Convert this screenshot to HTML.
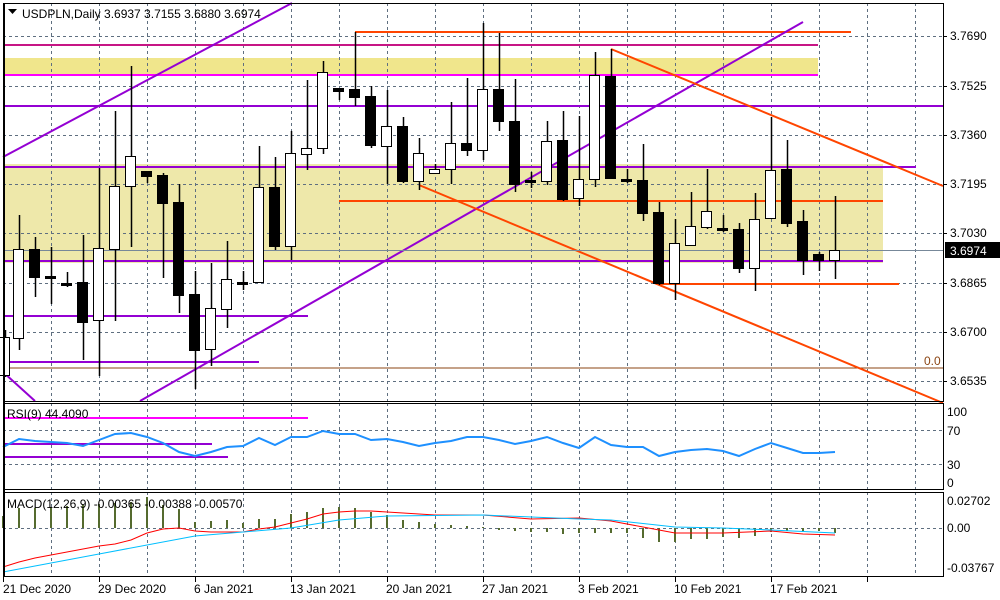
<!DOCTYPE html>
<html><head><meta charset="utf-8"><style>
html,body{margin:0;padding:0;background:#fff;width:1000px;height:600px;overflow:hidden}
svg{display:block;font-family:"Liberation Sans",Tahoma,sans-serif;font-size:12px}
</style></head><body>
<svg id="s" width="1000" height="600" viewBox="0 0 1000 600" xmlns="http://www.w3.org/2000/svg">
<rect width="1000" height="600" fill="#fff"/>
<rect x="3" y="58" width="815" height="16" fill="#F0E68C"/>
<rect x="3" y="164" width="880" height="99" fill="#EEE8AA"/>
<path fill="none" stroke="#5F6F80" stroke-width="1" stroke-dasharray="3 3" d="M3 36.5H943M3 86.5H943M3 135.5H943M3 184.5H943M3 233.5H943M3 283.5H943M3 332.5H943M3 381.5H943M3 430.5H943M3 464.5H943M3 528.5H943
M51.5 3V401M51.5 403V490M51.5 492V577
M99.5 3V401M99.5 403V490M99.5 492V577
M147.5 3V401M147.5 403V490M147.5 492V577
M195.5 3V401M195.5 403V490M195.5 492V577
M243.5 3V401M243.5 403V490M243.5 492V577
M291.5 3V401M291.5 403V490M291.5 492V577
M339.5 3V401M339.5 403V490M339.5 492V577
M387.5 3V401M387.5 403V490M387.5 492V577
M435.5 3V401M435.5 403V490M435.5 492V577
M483.5 3V401M483.5 403V490M483.5 492V577
M531.5 3V401M531.5 403V490M531.5 492V577
M579.5 3V401M579.5 403V490M579.5 492V577
M627.5 3V401M627.5 403V490M627.5 492V577
M675.5 3V401M675.5 403V490M675.5 492V577
M723.5 3V401M723.5 403V490M723.5 492V577
M771.5 3V401M771.5 403V490M771.5 492V577
M819.5 3V401M819.5 403V490M819.5 492V577
M867.5 3V401M867.5 403V490M867.5 492V577
M915.5 3V401M915.5 403V490M915.5 492V577"/>
<g stroke-width="2">
<line x1="3" y1="45" x2="818" y2="45" stroke="#C71585"/>
<line x1="3" y1="75" x2="818" y2="75" stroke="#FF00FF"/>
<line x1="3" y1="106" x2="943" y2="106" stroke="#9400D3"/>
<line x1="3" y1="167" x2="916" y2="167" stroke="#9400D3"/>
<line x1="3" y1="261" x2="883" y2="261" stroke="#9400D3"/>
<line x1="355" y1="32" x2="851" y2="32" stroke="#FF4500"/>
<line x1="339" y1="201" x2="883" y2="201" stroke="#FF4500"/>
<line x1="659" y1="284" x2="899" y2="284" stroke="#FF4500"/>
<line x1="3" y1="316" x2="308" y2="316" stroke="#9400D3"/>
<line x1="3" y1="362" x2="259" y2="362" stroke="#9400D3"/>
<line x1="3" y1="368" x2="943" y2="368" stroke="#8B4513" stroke-width="1"/>
<line x1="3" y1="157" x2="292" y2="3" stroke="#9400D3"/>
<line x1="140" y1="401" x2="803" y2="22" stroke="#9400D3"/>
<line x1="3" y1="372" x2="35" y2="401" stroke="#9400D3"/>
<line x1="419" y1="185" x2="943" y2="403" stroke="#FF4500"/>
<line x1="611" y1="49" x2="943" y2="186" stroke="#FF4500"/>
<line x1="3" y1="418" x2="308" y2="418" stroke="#FF00FF"/>
<line x1="3" y1="444" x2="212" y2="444" stroke="#9400D3"/>
<line x1="3" y1="457" x2="228" y2="457" stroke="#9400D3"/>
</g>
<line x1="3" y1="250.5" x2="943" y2="250.5" stroke="#778899"/>
<g id="c"></g>
<polyline id="rsi" fill="none" stroke="#1E90FF" stroke-width="2"/>
<g id="h"></g>
<polyline id="sig" fill="none" stroke="#FF0000" stroke-width="1"/>
<polyline id="mac" fill="none" stroke="#00BFFF" stroke-width="1"/>
<g fill="none" stroke="#000">
<rect x="3.5" y="3.5" width="940" height="398"/>
<rect x="3.5" y="403.5" width="940" height="86"/>
<rect x="3.5" y="492.5" width="940" height="84"/>
</g>
<line x1="4" y1="3" x2="4" y2="577" stroke="#000" stroke-width="2"/>
<g fill="#000">
<path d="M8 9h9l-4.5 5z"/>
<text x="22" y="18">USDPLN,Daily  3.6937 3.7155 3.6880 3.6974</text>
<text x="7" y="418">RSI(9) 44.4090</text>
<text x="7" y="508">MACD(12,26,9) -0.00365 -0.00388 -0.00570</text>
<text x="924" y="365" fill="#8B4513">0.0</text>
<text x="950" y="40">3.7690</text>
<text x="950" y="90">3.7525</text>
<text x="950" y="139">3.7360</text>
<text x="950" y="188">3.7195</text>
<text x="950" y="237">3.7030</text>
<text x="950" y="287">3.6865</text>
<text x="950" y="336">3.6700</text>
<text x="950" y="385">3.6535</text>
<text x="947" y="416">100</text>
<text x="947" y="435">70</text>
<text x="947" y="469">30</text>
<text x="947" y="487">0</text>
<text x="947" y="505">0.02702</text>
<text x="947" y="532">0.00</text>
<text x="947" y="572">-0.03767</text>
<text x="3" y="593">21 Dec 2020</text>
<text x="98" y="593">29 Dec 2020</text>
<text x="194" y="593">6 Jan 2021</text>
<text x="290" y="593">13 Jan 2021</text>
<text x="386" y="593">20 Jan 2021</text>
<text x="482" y="593">27 Jan 2021</text>
<text x="578" y="593">3 Feb 2021</text>
<text x="674" y="593">10 Feb 2021</text>
<text x="770" y="593">17 Feb 2021</text>
</g>
<rect x="945" y="242" width="55" height="16" fill="#000"/>
<text x="950" y="255" fill="#fff">3.6974</text>
<path stroke="#000" fill="none" d="M943 36.5h4M943 86.5h4M943 135.5h4M943 184.5h4M943 233.5h4M943 283.5h4M943 332.5h4M943 381.5h4M3.5 577v5M99.5 577v5M195.5 577v5M291.5 577v5M387.5 577v5M483.5 577v5M579.5 577v5M675.5 577v5M771.5 577v5M867.5 577v5"/>
<script>
var NS="http://www.w3.org/2000/svg";
function el(p,t,a){var e=document.createElementNS(NS,t);for(var k in a)e.setAttribute(k,a[k]);p.appendChild(e);return e;}
var C=[[5,337,375,330,377,1],[19,249,338,215,350,1],[35,249,277,237,297,0],[51,276,278,247,304,0],[67,283,285,272,287,0],[83,282,322,235,360,0],[99,248,320,168,376,1],[115,186,249,111,321,1],[131,156,186,66,247,1],[147,171,176,171,183,0],[163,175,203,173,278,0],[179,202,295,184,313,0],[195,294,350,271,389,0],[211,308,349,263,366,1],[227,279,309,241,328,1],[243,282,283,271,290,0],[259,187,282,146,283,1],[275,187,246,157,250,0],[291,153,246,131,260,1],[307,148,154,80,170,1],[323,72,148,61,154,1],[339,88,91,88,100,0],[355,89,97,32,106,0],[371,96,145,86,148,0],[387,126,146,90,184,1],[403,126,181,117,183,0],[419,153,181,138,190,1],[435,169,173,164,174,1],[451,143,169,102,184,1],[467,143,150,78,156,0],[483,89,150,23,160,1],[499,89,121,33,131,0],[515,121,184,79,192,0],[531,180,182,172,188,0],[547,141,181,121,185,1],[563,140,199,111,201,0],[579,179,198,116,206,1],[595,75,179,52,187,1],[611,76,178,49,179,0],[627,179,181,169,183,0],[643,180,213,144,221,0],[659,212,283,202,285,0],[675,243,283,219,300,1],[691,226,245,192,245,1],[707,211,227,169,229,1],[723,228,230,215,232,0],[739,229,268,223,273,0],[755,219,268,193,291,1],[771,170,218,117,219,1],[787,169,223,140,227,0],[803,221,260,210,275,0],[819,254,260,252,271,0],[835,250,260,196,279,1]];
var cg=document.getElementById('c');
C.forEach(function(c){el(cg,'line',{x1:c[0]+.5,x2:c[0]+.5,y1:c[3],y2:c[4],stroke:'#000','stroke-width':1.5});
var h=Math.max(c[2]-c[1],2);el(cg,'rect',{x:c[0]-5.5,y:c[1]+.5,width:10,height:h,fill:c[5]?'#fff':'#000',stroke:'#000','stroke-width':1});});
var R=[[3,447],[19,439],[35,441],[51,442],[67,443],[83,446],[99,440],[115,434],[131,433],[147,437],[163,443],[179,452],[195,456],[211,452],[227,447],[243,446],[259,438],[275,445],[291,437],[307,437],[323,431],[339,434],[355,434],[371,440],[387,439],[403,442],[419,446],[435,443],[451,441],[467,437],[483,437],[499,440],[515,444],[531,441],[547,437],[563,443],[579,448],[595,437],[611,445],[627,447],[643,447],[659,456],[675,452],[691,450],[707,449],[723,451],[739,456],[755,449],[771,443],[787,448],[803,453],[819,453],[835,452]];
document.getElementById('rsi').setAttribute('points',R.map(function(p){return p.join(',')}).join(' '));
var H=[[3,516],[19,508],[35,508],[51,507],[67,506],[83,505],[99,504],[115,503],[131,502],[147,497],[163,505],[179,509],[195,522],[211,521],[227,520],[243,523],[259,519],[275,519],[291,514],[307,512],[323,508],[339,507],[355,508],[371,512],[387,515],[403,520],[419,522],[435,524],[451,525],[467,526],[483,527],[499,530],[515,531],[531,532],[547,532],[563,534],[579,533],[595,533],[611,533],[627,533],[643,538],[659,542],[675,542],[691,539],[707,539],[723,537],[739,538],[755,536],[771,532],[787,531],[803,531],[819,531],[835,533]];
var hg=document.getElementById('h');
H.forEach(function(p){el(hg,'rect',{x:p[0]-1,y:Math.min(p[1],528),width:2,height:Math.max(Math.abs(p[1]-528),1),fill:'#556B2F'});});
var S=[[3,567],[19,562],[35,558],[51,555],[67,552],[83,549],[99,546],[115,544],[131,540],[147,533],[163,529],[179,528],[195,531],[211,532],[227,532],[243,532],[259,529],[275,527],[291,523],[307,519],[323,514],[339,512],[355,511],[371,511],[387,512],[435,515],[483,515],[531,519],[579,518],[611,521],[659,530],[675,533],[723,533],[771,531],[803,534],[835,535]];
var M=[[3,572],[99,554],[195,536],[291,528],[339,520],[387,516],[483,515],[579,519],[611,520],[675,527],[723,528],[771,530],[835,533]];
document.getElementById('sig').setAttribute('points',S.map(function(p){return p.join(',')}).join(' '));
document.getElementById('mac').setAttribute('points',M.map(function(p){return p.join(',')}).join(' '));
</script>
</svg>
</body></html>
